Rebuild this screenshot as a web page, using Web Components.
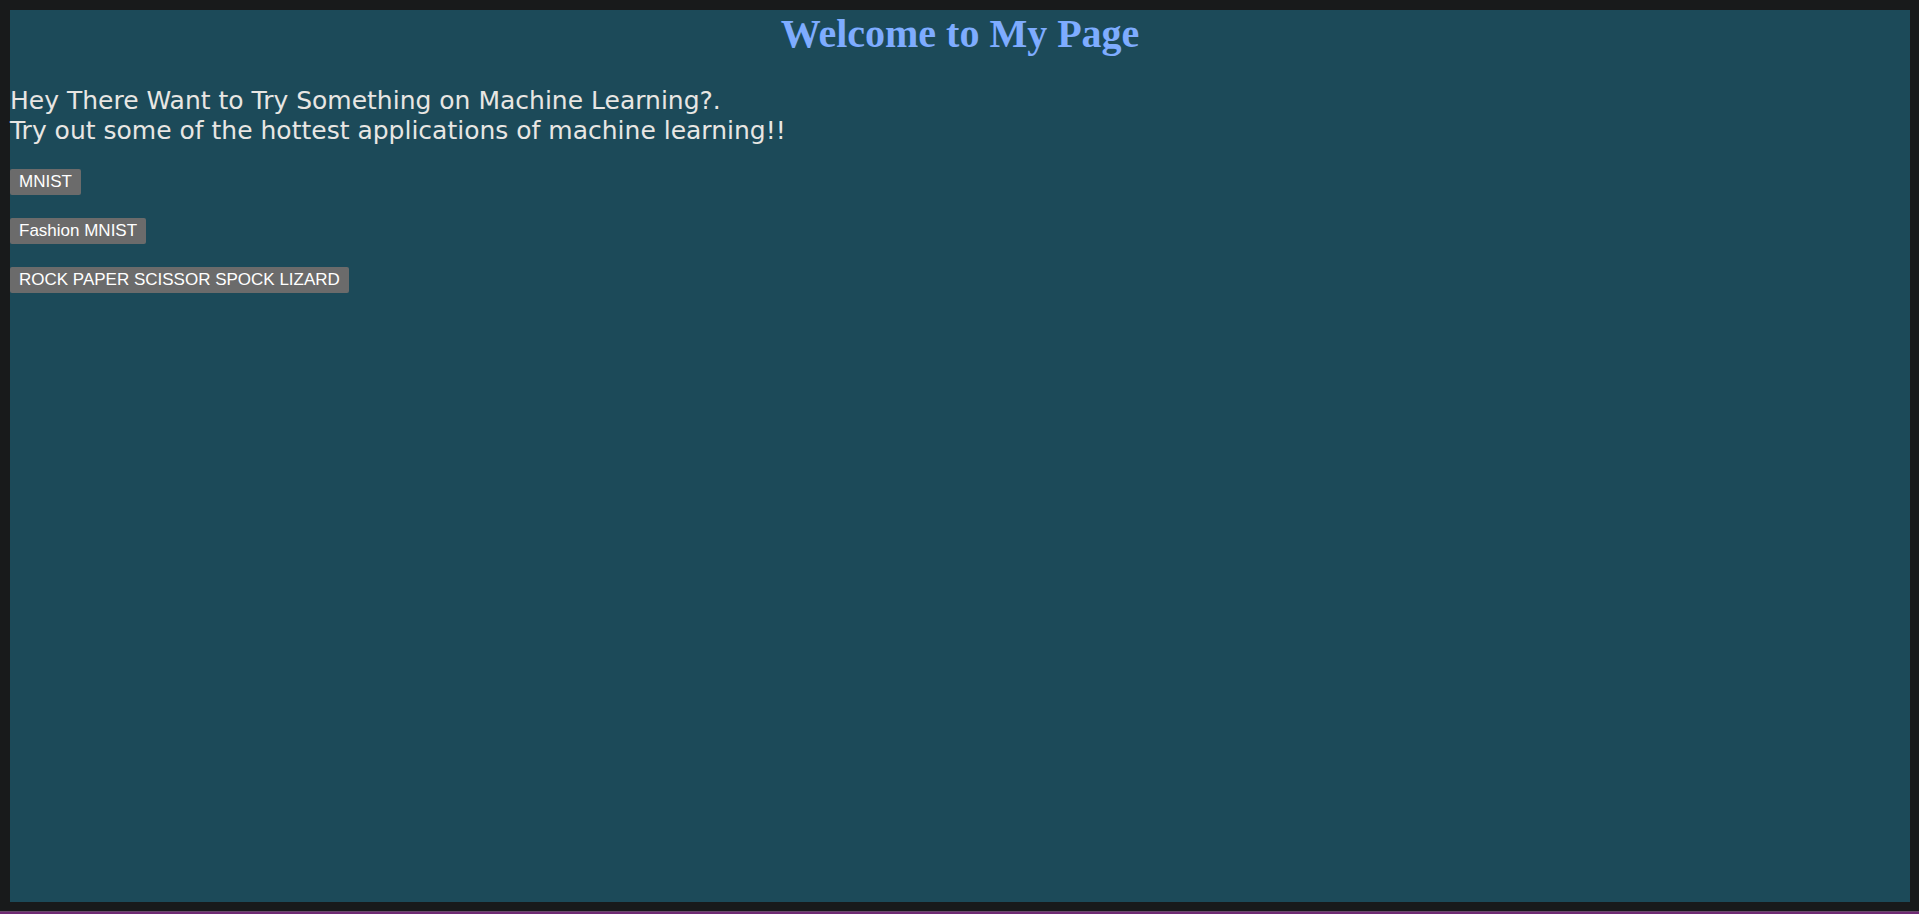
<!DOCTYPE html>
<html lang="en">
<head>
<meta charset="utf-8">
<title>Welcome to My Page</title>
<style>
html { background: #181a1b; }
body { margin: 0; }
</style>
</head>
<body>
<welcome-page>
  <page-title slot="title">Welcome to My Page</page-title>
  <page-intro>Hey There Want to Try Something on Machine Learning?.<br>Try out some of the hottest applications of machine learning!!</page-intro>
  <app-button>MNIST</app-button>
  <app-button>Fashion MNIST</app-button>
  <app-button>ROCK PAPER SCISSOR SPOCK LIZARD</app-button>
</welcome-page>
<script>
function define(name, html) {
  const template = document.createElement('template');
  template.innerHTML = html;
  customElements.define(name, class extends HTMLElement {
    constructor() {
      super();
      this.attachShadow({ mode: 'open' }).append(template.content.cloneNode(true));
    }
  });
}
define('welcome-page', `
<style>
:host { display: flex; box-sizing: border-box; min-height: 100vh; padding: 10px 9px 10px 10px; border-bottom: 2px solid #6f2b74; box-shadow: inset 0 -1px #69486b; }
main { flex: 1; background: #1c4a59; }
.content { display: flex; flex-direction: column; align-items: flex-start; gap: 23px; margin-top: 28px; }
</style>
<main><slot name="title"></slot><div class="content"><slot></slot></div></main>`);
define('page-title', `
<style>
:host { display: block; }
h1 { margin: 0; font: bold 40px/48px "Liberation Serif", "Times New Roman", serif; color: #7eacff; text-align: center; }
</style>
<h1><slot></slot></h1>`);
define('page-intro', `
<style>
:host { display: block; }
p { margin: 0; font: 25px/30px "DejaVu Sans", Verdana, sans-serif; color: #e8e6e3; }
</style>
<p><slot></slot></p>`);
define('app-button', `
<style>
:host { display: block; }
button { display: block; margin: 0; padding: 0 9px; border: 0; border-radius: 2px; background: #6b6b6b; color: #fff; font: 17px/26px "Liberation Sans", Arial, sans-serif; }
</style>
<button type="button"><slot></slot></button>`);
</script>
</body>
</html>
